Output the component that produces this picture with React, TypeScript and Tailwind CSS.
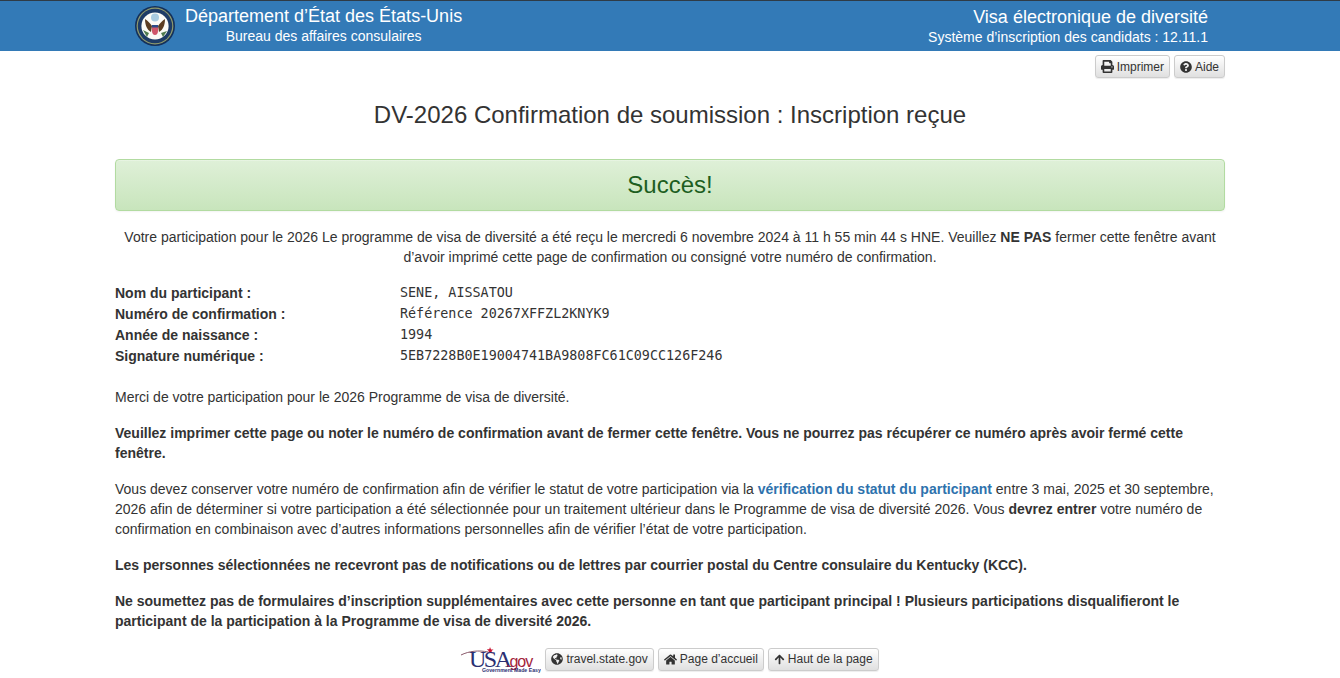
import { FaArrowUp, FaGlobeAmericas, FaHome, FaPrint, FaQuestionCircle } from "react-icons/fa";
import type { ReactNode } from "react";

function Seal() {
  return (
    <svg viewBox="0 0 40 40" className="h-[40px] w-[40px] shrink-0">
      <circle cx="20" cy="20" r="20" fill="#14305a" />
      <circle cx="20" cy="20" r="18.4" fill="#8f9a6c" />
      <circle cx="20" cy="20" r="17.2" fill="#1d3b66" />
      <circle cx="20" cy="20" r="13.6" fill="#fbfbf6" />
      <circle cx="20" cy="11.5" r="4" fill="#a9cbe0" />
      <path d="M10 13c3 2 5 4 7 7l-1 6c-4-2-6-7-6-13zM30 13c-3 2-5 4-7 7l1 6c4-2 6-7 6-13z" fill="#5b3d22" />
      <path d="M17 19h6v6c0 2-1 4-3 4s-3-2-3-4z" fill="#d0566a" />
      <path d="M17 19h6v2.5h-6z" fill="#2a4a86" />
      <path d="M8 24l6 3-2 4zM32 25l-6 2 2 4z" fill="#4f7a4e" />
    </svg>
  );
}

function UsaGov() {
  return (
    <svg viewBox="0 0 80 30" className="h-[30px] w-[80px] shrink-0">
      <path d="M0 11C8 7 18 6 27 8" stroke="#8a5a6b" strokeWidth="1" fill="none" />
      <path d="M29 3l1 2.5 2.5 0-2 1.6 1 2.6-2.5-1.6-2 1.2 0.8-2.4-2-1.6 2.5 0z" fill="#c8102e" />
      <text x="8" y="23" fontFamily="Liberation Serif, serif" fontSize="24" fill="#2b2f72" letterSpacing="-2.5">USA</text>
      <text x="45" y="23" fontFamily="Liberation Sans, sans-serif" fontSize="16" fill="#a3243b" letterSpacing="-1">.gov</text>
      <text x="21" y="28" fontFamily="Liberation Sans, sans-serif" fontSize="5.2" fontWeight="700" fill="#2b2f72">Government Made Easy</text>
    </svg>
  );
}

function Btn({ icon, children }: { icon: ReactNode; children: ReactNode }) {
  return (
    <button className="flex h-[23px] items-center gap-[3px] rounded-[3px] border border-[#ccc] bg-gradient-to-b from-white to-[#e0e0e0] px-[5px] text-[12px] leading-[18px] text-[#333] shadow-[0_1px_1px_rgba(0,0,0,0.075)]">
      {icon}
      {children}
    </button>
  );
}

function InfoRow({ label, value }: { label: string; value: string }) {
  return (
    <div className="flex h-[21px] items-center">
      <b className="w-[285px] shrink-0 font-bold">{label}</b>
      <span className="font-['DejaVu_Sans_Mono',monospace] text-[13.4px]">{value}</span>
    </div>
  );
}

export default function App() {
  return (
    <div className="min-h-[678px] bg-white font-['Liberation_Sans',Arial,sans-serif] text-[14px] leading-[20px] text-[#333]">
      <header className="flex h-[51px] justify-center border-t border-t-[#2f3b46] bg-[#337ab7] text-white">
        <div className="flex w-[1110px] justify-between">
          <div className="flex items-center gap-[10px] pl-[20px]">
            <Seal />
            <div className="self-start pt-[4px] text-center">
              <div className="text-[18px] leading-[23px]">Département d’État des États-Unis</div>
              <div className="text-[14px] leading-[16px]">Bureau des affaires consulaires</div>
            </div>
          </div>
          <div className="pt-[4px] pr-[17px] text-right">
            <div className="text-[18px] leading-[24px]">Visa électronique de diversité</div>
            <div className="text-[14px] leading-[16px]">Système d’inscription des candidats : 12.11.1</div>
          </div>
        </div>
      </header>

      <main className="mx-auto w-[1110px]">
        <div className="flex justify-end gap-[4px] pt-[4px]">
          <Btn icon={<FaPrint className="h-[13px] w-[13px]" />}>Imprimer</Btn>
          <Btn icon={<FaQuestionCircle className="h-[12px] w-[12px]" />}>Aide</Btn>
        </div>

        <h1 className="mt-[22px] text-center text-[24px] leading-[30px] font-normal">
          DV-2026 Confirmation de soumission : Inscription reçue
        </h1>

        <div className="mt-[29px] rounded-[4px] border border-[#b2dba1] bg-gradient-to-b from-[#dff0d8] to-[#c8e5bc] py-[11px] text-center text-[24px] leading-[28px] text-[#1d5e1f] shadow-[inset_0_1px_0_rgba(255,255,255,0.25),0_1px_2px_rgba(0,0,0,0.05)]">
          Succès!
        </div>

        <p className="mt-[16px] text-center">
          Votre participation pour le 2026 Le programme de visa de diversité a été reçu le mercredi 6 novembre 2024 à 11 h 55 min 44 s HNE. Veuillez <b>NE PAS</b> fermer cette fenêtre avant d’avoir imprimé cette page de confirmation ou consigné votre numéro de confirmation.
        </p>

        <div className="mt-[15px]">
          <InfoRow label="Nom du participant :" value="SENE, AISSATOU" />
          <InfoRow label="Numéro de confirmation :" value="Référence 20267XFFZL2KNYK9" />
          <InfoRow label="Année de naissance :" value="1994" />
          <InfoRow label="Signature numérique :" value="5EB7228B0E19004741BA9808FC61C09CC126F246" />
        </div>

        <p className="mt-[21px]">Merci de votre participation pour le 2026 Programme de visa de diversité.</p>
        <p className="mt-[16px] font-bold">
          Veuillez imprimer cette page ou noter le numéro de confirmation avant de fermer cette fenêtre. Vous ne pourrez pas récupérer ce numéro après avoir fermé cette fenêtre.
        </p>
        <p className="mt-[16px]">
          Vous devez conserver votre numéro de confirmation afin de vérifier le statut de votre participation via la <a href="#" className="font-bold text-[#2e72ad]">vérification du statut du participant</a> entre 3 mai, 2025 et 30 septembre, 2026 afin de déterminer si votre participation a été sélectionnée pour un traitement ultérieur dans le Programme de visa de diversité 2026. Vous <b>devrez entrer</b> votre numéro de confirmation en combinaison avec d’autres informations personnelles afin de vérifier l’état de votre participation.
        </p>
        <p className="mt-[16px] font-bold">
          Les personnes sélectionnées ne recevront pas de notifications ou de lettres par courrier postal du Centre consulaire du Kentucky (KCC).
        </p>
        <p className="mt-[16px] font-bold">
          Ne soumettez pas de formulaires d’inscription supplémentaires avec cette personne en tant que participant principal ! Plusieurs participations disqualifieront le participant de la participation à la Programme de visa de diversité 2026.
        </p>

        <div className="mt-[13px] flex items-center justify-center">
          <UsaGov />
          <div className="ml-[4px] flex gap-[4px]">
            <Btn icon={<FaGlobeAmericas className="h-[12px] w-[12px]" />}>travel.state.gov</Btn>
            <Btn icon={<FaHome className="h-[13px] w-[13px]" />}>Page d’accueil</Btn>
            <Btn icon={<FaArrowUp className="h-[11px] w-[11px]" />}>Haut de la page</Btn>
          </div>
        </div>
      </main>
    </div>
  );
}
